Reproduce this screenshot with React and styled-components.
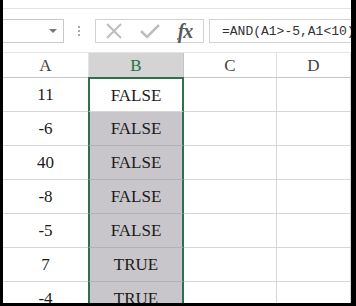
import React from 'react';
import styled, { createGlobalStyle } from 'styled-components';

const GlobalStyle = createGlobalStyle`
  html, body {
    margin: 0;
    padding: 0;
    background: #000;
  }
  body {
    width: 356px;
    height: 306px;
    overflow: hidden;
  }
`;

const green = '#2e6f4e';
const grid = '#d6d6d6';

const Frame = styled.div`
  margin-left: 3px;
  width: 348px;
  height: 303px;
  background: #fff;
  overflow: hidden;
  font-family: "Liberation Serif", serif;
`;

const TopStrip = styled.div`
  height: 8px;
  border-bottom: 1px solid #e2e2e2;
`;

const Toolbar = styled.div`
  display: flex;
  align-items: center;
  height: 24px;
  margin-top: 10px;
  margin-bottom: 9px;
`;

const NameBox = styled.div`
  box-sizing: border-box;
  width: 61px;
  height: 24px;
  border: 1px solid #c9c9c9;
  border-left: none;
  display: flex;
  align-items: center;
  justify-content: flex-end;
  padding-right: 6px;
`;

const Arrow = styled.div`
  width: 0;
  height: 0;
  border-left: 4px solid transparent;
  border-right: 4px solid transparent;
  border-top: 4px solid #777;
`;

const Dots = styled.div`
  width: 30px;
  display: flex;
  flex-direction: column;
  align-items: center;
  gap: 2px;

  span {
    width: 2px;
    height: 2px;
    background: #aaa;
  }
`;

const FxBox = styled.div`
  box-sizing: border-box;
  width: 109px;
  height: 24px;
  margin-left: 1px;
  border: 1px solid #d2d2d2;
  display: flex;
  align-items: center;
  position: relative;
`;

const IconSlot = styled.div`
  width: ${p => p.w}px;
  display: flex;
  justify-content: center;
  align-items: center;
`;

const Fx = styled.span`
  font-family: "Liberation Serif", serif;
  font-style: italic;
  font-weight: bold;
  font-size: 20px;
  color: #5a5a5a;
  letter-spacing: -1px;
  line-height: 1;
`;

const Tick = styled.span`
  position: absolute;
  right: 24px;
  bottom: 2px;
  width: 2px;
  height: 2px;
  background: #888;
`;

const FormulaBox = styled.div`
  box-sizing: border-box;
  flex: 1;
  height: 24px;
  margin-left: 5px;
  margin-right: -20px;
  border: 1px solid #d2d2d2;
  padding-left: 12px;
  display: flex;
  align-items: center;
  font-family: "Liberation Mono", monospace;
  font-size: 13px;
  color: #333;
  white-space: nowrap;
  overflow: hidden;
`;

const Sheet = styled.div`
  display: grid;
  grid-template-columns: 86px 95px 93px 1fr;
  grid-template-rows: 25px;
  grid-auto-rows: 34px;
  border-top: 1px solid #e4e4e4;
`;

const HeadCell = styled.div`
  box-sizing: border-box;
  display: flex;
  align-items: center;
  justify-content: center;
  font-size: 17px;
  color: ${p => (p.active ? '#217346' : '#444')};
  background: ${p => (p.active ? '#d4d4d4' : '#fff')};
  border-right: 1px solid ${p => (p.active ? '#c4c4c4' : '#e2e2e2')};
  border-bottom: 1px solid #c8c8c8;
  padding-top: 2px;
`;

const Cell = styled.div`
  box-sizing: border-box;
  display: flex;
  align-items: center;
  justify-content: center;
  font-size: 17px;
  color: #1a1a1a;
  border-bottom: 1px solid ${p => (p.selected && !p.active ? '#b3b1b5' : grid)};
  border-right: 1px solid ${grid};
  background: #fff;
  padding-top: 1px;

  ${p => p.selected && `
    background: ${p.active ? '#fff' : '#c9c6cb'};
    border-left: 2px solid ${green};
    border-right: 2px solid ${green};
    margin-left: -1px;
  `}
  ${p => p.active && `
    border-top: 2px solid ${green};
    margin-top: -1px;
  `}
`;

const rows = [
  ['11', 'FALSE'],
  ['-6', 'FALSE'],
  ['40', 'FALSE'],
  ['-8', 'FALSE'],
  ['-5', 'FALSE'],
  ['7', 'TRUE'],
  ['-4', 'TRUE'],
];

export default function App() {
  return (
    <>
      <GlobalStyle />
      <Frame>
        <TopStrip />
        <Toolbar>
          <NameBox>
            <Arrow />
          </NameBox>
          <Dots>
            <span />
            <span />
            <span />
          </Dots>
          <FxBox>
            <IconSlot w={36}>
              <svg width="18" height="18" viewBox="0 0 18 18">
                <path d="M2 2 L16 16 M16 2 L2 16" stroke="#bdbdbd" strokeWidth="2" fill="none" />
              </svg>
            </IconSlot>
            <IconSlot w={36}>
              <svg width="20" height="16" viewBox="0 0 20 16">
                <path d="M1 8 L7 14 L19 2" stroke="#bdbdbd" strokeWidth="2.5" fill="none" />
              </svg>
            </IconSlot>
            <IconSlot w={34}>
              <Fx>fx</Fx>
            </IconSlot>
            <Tick />
          </FxBox>
          <FormulaBox>=AND(A1&gt;-5,A1&lt;10)</FormulaBox>
        </Toolbar>
        <Sheet>
          <HeadCell>A</HeadCell>
          <HeadCell active>B</HeadCell>
          <HeadCell>C</HeadCell>
          <HeadCell>D</HeadCell>
          {rows.map(([a, b], i) => (
            <React.Fragment key={i}>
              <Cell>{a}</Cell>
              <Cell selected active={i === 0}>{b}</Cell>
              <Cell />
              <Cell />
            </React.Fragment>
          ))}
        </Sheet>
      </Frame>
    </>
  );
}
